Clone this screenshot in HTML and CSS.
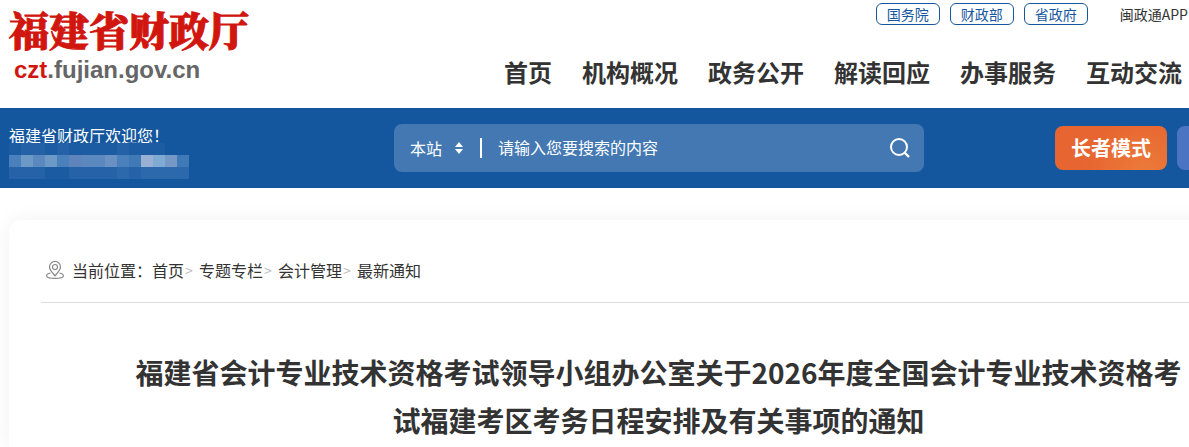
FILE: index.html
```html
<!DOCTYPE html>
<html lang="zh-CN">
<head>
    <meta charset="UTF-8">
    <meta name="viewport" content="width=device-width, initial-scale=1.0">
    <title>福建省财政厅</title>
    <link rel="stylesheet" href="styles.css">
</head>
<body>
    <header class="header">
        <a class="logo" href="#">
            <span class="logo-name">福建省财政厅</span>
            <span class="logo-url"><b>czt</b>.fujian.gov.cn</span>
        </a>
        <div class="header-right">
            <div class="top-links">
                <a class="pill" href="#">国务院</a>
                <a class="pill" href="#">财政部</a>
                <a class="pill" href="#">省政府</a>
                <a class="app-link" href="#">闽政通APP</a>
            </div>
            <nav class="nav">
                <a href="#">首页</a>
                <a href="#">机构概况</a>
                <a href="#">政务公开</a>
                <a href="#">解读回应</a>
                <a href="#">办事服务</a>
                <a href="#">互动交流</a>
            </nav>
        </div>
    </header>

    <div class="bar">
        <div class="welcome">
            <p>福建省财政厅欢迎您！</p>
            <svg class="mosaic" width="180" height="36" viewBox="0 0 15 3" shape-rendering="crispEdges" aria-hidden="true">
                <path fill="#1b5ca3" d="M0 0h13v1H0z"/>
                <path fill="#2461a6" d="M1 0h2v1H1zM4 0h1v1H4zM9 0h1v1H9z"/>
                <path fill="#4a80bb" d="M0 1h15v1H0z"/>
                <path fill="#6d99c7" d="M1 1h1v1H1zM3 1h1v1H3z"/>
                <path fill="#5a88bf" d="M2 1h1v1H2zM6 1h2v1H6z"/>
                <path fill="#5f83bb" d="M5 1h1v1H5z"/>
                <path fill="#6991c4" d="M8 1h1v1H8z"/>
                <path fill="#3f79b6" d="M10 1h1v1h-1zM14 1h1v1h-1z"/>
                <path fill="#98b0d3" d="M11 1h1v1h-1z"/>
                <path fill="#7fabd3" d="M12 1h1v1h-1z"/>
                <path fill="#7698c6" d="M13 1h1v1h-1z"/>
                <path fill="#2562a7" d="M0 2h3v1H0zM5 2h6v1H5z"/>
                <path fill="#1b5ba2" d="M3 2h2v1H3z"/>
                <path fill="#2c68ac" d="M9 2h1v1H9zM11 2h4v1h-4z"/>
            </svg>
        </div>
        <form class="search">
            <div class="scope">
                <select class="scope-select" aria-label="搜索范围">
                    <option>本站</option>
                </select>
                <svg class="scope-arrow" width="8" height="12" viewBox="0 0 8 12" aria-hidden="true">
                    <path fill="#fff" d="M4 0l4 5H0zM4 12L0 7h8z"/>
                </svg>
            </div>
            <input class="search-input" type="text" placeholder="请输入您要搜索的内容" aria-label="搜索内容">
            <button class="search-button" type="submit" aria-label="搜索">
                <svg width="22" height="22" viewBox="0 0 22 22" fill="none" stroke="#fff" stroke-width="2">
                    <circle cx="10" cy="10" r="8"/>
                    <path d="M15.5 15.5L20 20" stroke-width="2.4"/>
                </svg>
            </button>
        </form>
        <div class="modes">
            <button class="mode elder" type="button">长者模式</button>
            <button class="mode second" type="button" aria-label="更多"></button>
        </div>
    </div>

    <main class="main">
        <article class="card">
            <div class="crumbs">
                <svg class="pin" width="18" height="18" viewBox="0 0 18 18" fill="none" stroke="#888" stroke-width="1.2" aria-hidden="true">
                    <path d="M9 14.800C6.200 11.500 3.500 9 3.500 6a5.500 5.500 0 0 1 11 0c0 3-2.700 5.500-5.500 8.800z"/>
                    <circle cx="9" cy="6" r="2.500"/>
                    <path d="M4.500 12C2 12.500.600 13.500.600 14.700.600 16.300 4 17.400 9 17.400s8.400-1.100 8.400-2.700c0-1.200-1.400-2.200-3.900-2.700"/>
                </svg>
                <span>当前位置：</span>
                <a href="#">首页</a><i>&gt;</i>
                <a href="#">专题专栏</a><i>&gt;</i>
                <a href="#">会计管理</a><i>&gt;</i>
                <a href="#">最新通知</a>
            </div>
            <h1 class="title">福建省会计专业技术资格考试领导小组办公室关于2026年度全国会计专业技术资格考试福建考区考务日程安排及有关事项的通知</h1>
        </article>
    </main>
</body>
</html>
```
FILE: styles.css
```css
* {
    box-sizing: border-box;
}
body {
    margin: 0;
    min-height: 100vh;
    display: flex;
    flex-direction: column;
    overflow-x: hidden;
    background: #fff;
    color: #333;
    font-family: "Noto Sans CJK SC", sans-serif;
    font-size: 16px;
    line-height: 24px;
}
a {
    color: inherit;
    text-decoration: none;
}
button, input, select {
    font: inherit;
    color: inherit;
    border: none;
    background: none;
    padding: 0;
}

/* header */
.header {
    display: flex;
    justify-content: space-between;
    height: 108px;
    padding-left: 9px;
}
.logo {
    display: flex;
    flex-direction: column;
    padding-top: 4px;
    white-space: nowrap;
}
.logo-name {
    font-family: "Noto Serif CJK SC", "Noto Sans CJK SC", serif;
    font-size: 40px;
    font-weight: 900;
    line-height: 50px;
    color: #d1160f;
    -webkit-text-stroke: 1px #d1160f;
}
.logo-url {
    padding-left: 5px;
    font-family: "Liberation Sans", Arial, sans-serif;
    font-size: 24px;
    font-weight: bold;
    line-height: 32px;
    color: #666;
}
.logo-url b {
    color: #d1160f;
}
.header-right {
    display: flex;
    flex-direction: column;
    align-items: flex-end;
    padding-top: 3px;
    white-space: nowrap;
}
.top-links {
    display: flex;
    gap: 10px;
    font-size: 14px;
    line-height: 20px;
}
.pill {
    padding: 0 10px;
    border: 1px solid #15579f;
    border-radius: 6px;
    color: #15579f;
}
.app-link {
    margin-left: 22px;
    padding-right: 1px;
    line-height: 22px;
}
.nav {
    display: flex;
    gap: 30px;
    padding: 29px 7px 0 0;
    font-size: 24px;
    font-weight: bold;
    line-height: 36px;
}

/* blue bar */
.bar {
    display: flex;
    align-items: center;
    height: 80px;
    padding-left: 9px;
    background: #15579f;
    color: #fff;
}
.welcome {
    flex: 0 0 385px;
    padding-top: 6px;
}
.welcome p {
    margin: 0;
    line-height: 24px;
}
.mosaic {
    display: block;
    margin-top: -4px;
}
.search {
    flex: 1;
    display: flex;
    align-items: center;
    height: 48px;
    margin-right: 131px;
    padding: 0 13px 0 16px;
    border-radius: 8px;
    background: rgba(255, 255, 255, 0.2);
}
.scope {
    display: flex;
    align-items: center;
    width: 72px;
    border-right: 2px solid #fff;
    height: 20px;
}
.scope-select {
    width: 45px;
    height: 24px;
    padding-bottom: 2px;
    appearance: none;
}
.scope-select option {
    color: #333;
}
.search-input {
    flex: 1;
    min-width: 0;
    height: 24px;
    padding-bottom: 2px;
    margin-left: 16px;
    outline: none;
}
.search-input::placeholder {
    color: #fff;
    opacity: 1;
}
.search-button {
    width: 22px;
    height: 22px;
    cursor: pointer;
}
.search-button svg {
    display: block;
}
.modes {
    flex: 0 0 134px;
    display: flex;
    gap: 10px;
    overflow: hidden;
}
.mode {
    flex: 0 0 112px;
    height: 44px;
    border-radius: 8px;
    font-size: 20px;
    font-weight: bold;
    cursor: pointer;
}
.elder {
    background: radial-gradient(circle at 80% 110%, #ec7b3a, #e76530 60%);
}
.second {
    background: #4b74c3;
}

/* article, the card runs past the right edge */
.main {
    flex: 1;
    display: flex;
    padding: 32px 0 0 9px;
}
.card {
    flex: 1;
    margin-right: -24px;
    padding-left: 32px;
    border-top-left-radius: 12px;
    box-shadow: 0 0 20px rgba(0, 0, 0, 0.06);
}
.crumbs {
    display: flex;
    align-items: center;
    height: 83px;
    padding: 18px 0 0 5px;
    border-bottom: 1px solid #ddd;
    white-space: nowrap;
}
.pin {
    margin-right: 8px;
}
.crumbs i {
    width: 15px;
    padding-left: 1px;
    color: #bbb;
    font-size: 14px;
    font-style: normal;
}
.title {
    margin: 0;
    padding: 45px 24px 0 87px;
    font-size: 28px;
    line-height: 48px;
    text-align: center;
}
```
